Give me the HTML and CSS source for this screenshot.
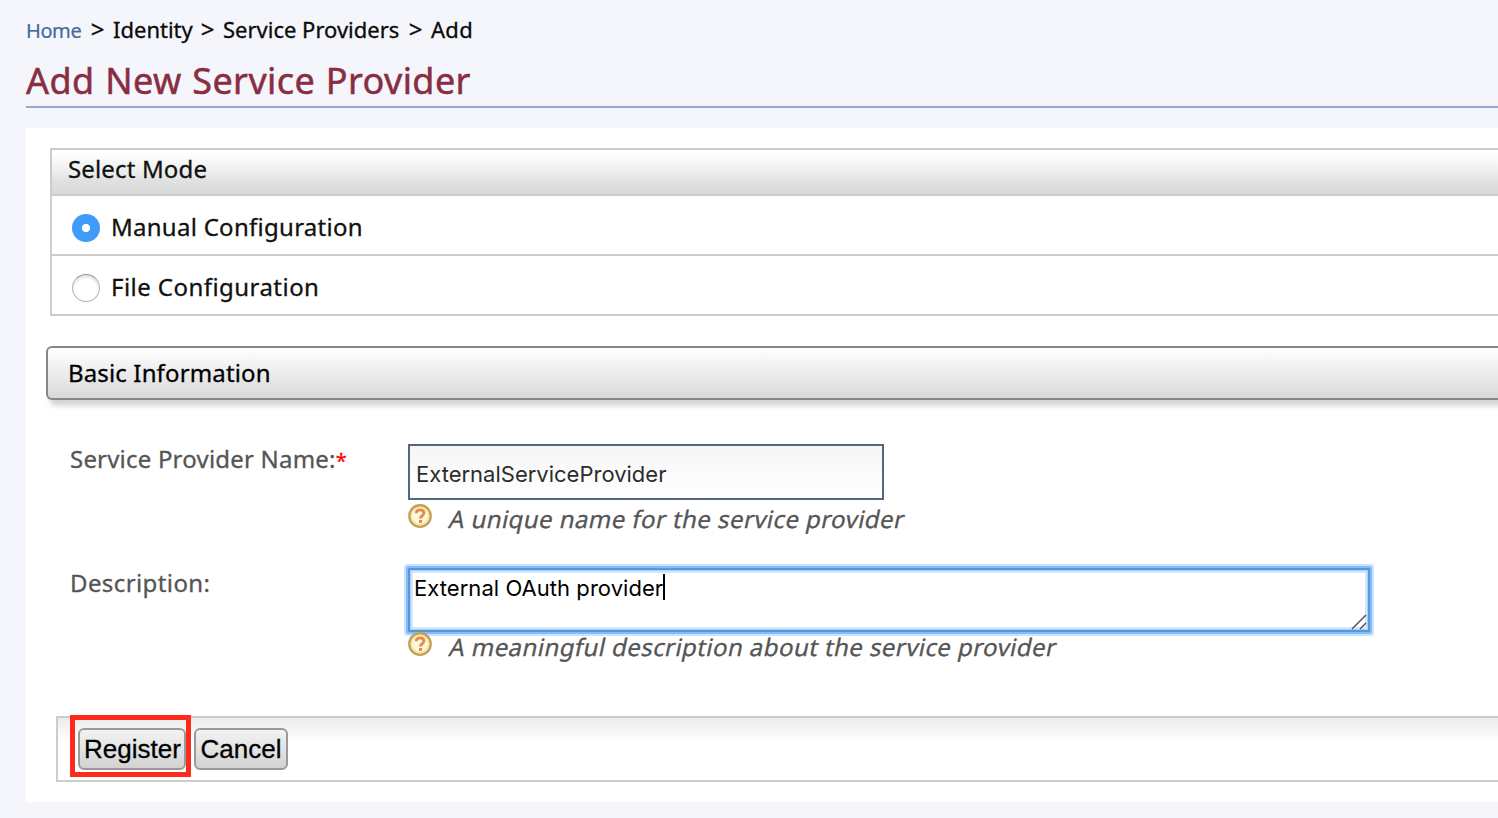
FILE: index.html
```
<!DOCTYPE html>
<html lang="en">
<head>
<meta charset="utf-8">
<title>Add New Service Provider</title>
<link rel="stylesheet" href="styles.css">
</head>
<body>
<svg class="defs" width="0" height="0" aria-hidden="true">
  <symbol id="help" viewBox="0 0 24 24">
    <circle cx="12" cy="12" r="10.7" fill="#fdf8dc" stroke="#c5a050" stroke-width="2.4"/>
    <circle cx="12" cy="12" r="8.8" fill="none" stroke="#f3dfa4" stroke-width="1.4"/>
    <path d="M8.2 9.2C8.4 7 9.8 5.9 12.1 5.9c2.3 0 3.8 1.2 3.8 3.1 0 2.5-3.4 2.7-3.4 5.6" fill="none" stroke="#e6894a" stroke-width="2.9"/>
    <rect x="11" y="16" width="3" height="3" fill="#e6894a"/>
  </symbol>
</svg>
<nav class="crumbs">
  <a class="c-home">Home</a><span class="gt">&gt;</span><span class="c-id">Identity</span><span class="gt">&gt;</span><span class="c-sp">Service Providers</span><span class="gt">&gt;</span><span class="c-add">Add</span>
</nav>
<h1 class="title"><span>Add New Service Provider</span></h1>
<main class="work">
  <section class="mode">
    <div class="mode-head"><span class="t-select">Select Mode</span></div>
    <label class="mode-row"><i class="radio on"></i><span class="t-manual">Manual Configuration</span></label>
    <label class="mode-row"><i class="radio"></i><span class="t-file">File Configuration</span></label>
  </section>
  <h2 class="section"><span class="t-basic">Basic Information</span></h2>
  <div class="form">
    <div class="label"><span class="t-name">Service Provider Name:</span><span class="req">*</span></div>
    <div class="field">
      <div class="input"><span class="t-input">ExternalServiceProvider</span></div>
      <div class="help"><svg><use href="#help"/></svg><span class="t-help1">A unique name for the service provider</span></div>
    </div>
    <div class="label"><span class="t-desc">Description:</span></div>
    <div class="field">
      <div class="area"><span class="t-area">External OAuth provider</span><i class="caret"></i>
        <svg class="grip" viewBox="0 0 16 16"><path d="M1 15L15 1M9 15l6-6" stroke="#555" stroke-width="1.5" fill="none"/></svg>
      </div>
      <div class="help second"><svg><use href="#help"/></svg><span class="t-help2">A meaningful description about the service provider</span></div>
    </div>
  </div>
  <div class="actions">
    <div class="mark"><div class="btn reg"><span>Register</span></div></div>
    <div class="btn cancel"><span>Cancel</span></div>
  </div>
</main>
</body>
</html>
```
FILE: styles.css
```
* { box-sizing: border-box; }
body {
  margin: 0;
  padding: 14px 0 16px 26px;
  height: 818px;
  overflow: hidden;
  background: #f4f6fb;
  color: #111;
  font: 24px/32px "Noto Sans", sans-serif;
  white-space: nowrap;
  -webkit-text-stroke: 0.3px;
}
.defs { position: absolute; }
.crumbs { display: flex; height: 30px; font-size: 22px; line-height: 30px; color: #0a0a0a; }
.c-home { width: 55px; padding-top: 2px; line-height: 29px; color: #456a9c; font-size: 20px; letter-spacing: -0.4px; -webkit-text-stroke: 0.2px; }
.gt { width: 31px; padding-left: 2px; text-align: center; font-size: 24px; }
.c-id { width: 79px; padding-left: 1px; }
.c-sp { width: 177px; padding-left: 1px; }
.c-add { padding-left: 1px; letter-spacing: 0.3px; }
.title {
  margin: 14px 0 20px;
  height: 50px;
  padding-top: 1px;
  border-bottom: 2px solid #94a9cf;
  color: #892d42;
  font-size: 36px;
  font-weight: 400;
  line-height: 44px;
  letter-spacing: 0.4px;
  word-spacing: 0.9px;
  -webkit-text-stroke: 0.5px;
}
.work { height: 674px; padding: 20px 0 0; background: #fff; }
.mode { margin-left: 24px; border: 2px solid #ccc; border-right: 0; }
.mode-head {
  height: 44px;
  padding: 3px 0 0 16px;
  background: linear-gradient(#fff 8%, #eceeed 50%, #dfe0e2 72%, #d8d8d8);
}
.mode-row { display: flex; align-items: center; gap: 11px; height: 60px; padding: 4px 0 0 20px; border-top: 2px solid #ccc; }
.radio {
  width: 28px;
  height: 28px;
  margin-top: 2px;
  border: 1px solid #b5b5b5;
  border-top-color: #989898;
  border-radius: 50%;
  background: #fff;
  box-shadow: inset 0 2px 3px #ddd;
}
.radio.on { border: 0; background: radial-gradient(circle, #fff 0 3.7px, #419bf9 4.5px); box-shadow: none; }
.t-select { letter-spacing: 0.15px; }
.t-manual { letter-spacing: 0.27px; }
.t-file { letter-spacing: 0.45px; }
.t-basic { letter-spacing: 0.14px; }
.t-name { letter-spacing: 0.2px; }
.t-desc { letter-spacing: 0.4px; }
.section {
  height: 54px;
  margin: 30px 0 0 20px;
  padding: 9px 0 0 20px;
  border: 2px solid #878787;
  border-right: 0;
  border-radius: 6px 0 0 6px;
  background: linear-gradient(#fff, #d9d9d9);
  box-shadow: 4px 6px 5px #d5d5d5;
  color: #000;
  font-size: 24px;
  font-weight: 400;
}
.form { display: grid; grid-template-columns: 338px 1fr; grid-template-rows: 124px 148px; margin: 44px 0 0 44px; }
.label { margin-top: -1px; color: #555; }
.req { color: #f00; font-size: 20px; }
.input {
  width: 476px;
  height: 56px;
  padding: 12px 0 0 6px;
  border: 2px solid #56677d;
  background: linear-gradient(#f6f6f6, #fff);
  color: #2c2c2c;
  font: 22px/32px Inter, sans-serif;
  -webkit-text-stroke: 0;
}
.help { display: flex; gap: 18px; height: 32px; padding-top: 3px; color: #555; }
.help span { transform: skewX(-12deg); }
.t-help1 { letter-spacing: 0.43px; }
.t-help2 { letter-spacing: 0.43px; }
.help svg { width: 24px; height: 24px; margin-top: 1px; }
.area {
  position: relative;
  display: flex;
  width: 962px;
  height: 64px;
  padding: 2px 0 0 4px;
  border: 2px solid #5b96d5;
  box-shadow: 0 0 0 2px #83bcfa, 0 0 0 4px #cbe3fe, inset 0 0 0 1px #a9d0fa, inset 0 0 0 3px #d3e7fd;
  border-radius: 1px;
  background: #fff;
  color: #000;
  font: 22px/32px Inter, sans-serif;
  letter-spacing: 0.05px;
  -webkit-text-stroke: 0;
}
.caret { width: 2px; height: 26px; margin-top: 2px; background: #000; }
.grip { position: absolute; right: 1px; bottom: 0; width: 16px; height: 16px; }
.second { padding-top: 0; margin-top: -1px; position: relative; }
.actions {
  display: flex;
  height: 66px;
  margin-left: 30px;
  padding-left: 12px;
  border: 2px solid #ccc;
  border-right: 0;
  background: linear-gradient(#ebebeb, #fff 24px);
  font: 26px/38px "Liberation Sans", sans-serif;
  color: #000;
}
.mark { width: 121px; height: 62px; margin: -3px 3px 0 0; padding: 8px 0 0 3px; border: 5px solid #fd2a1e; }
.btn { height: 42px; border: 2px solid #9a9a9a; border-radius: 6px; background: linear-gradient(#f3f3f3, #d2d2d2); text-align: center; }
.reg { width: 108px; padding-left: 1px; }
.cancel { width: 94px; margin-top: 10px; }
```
